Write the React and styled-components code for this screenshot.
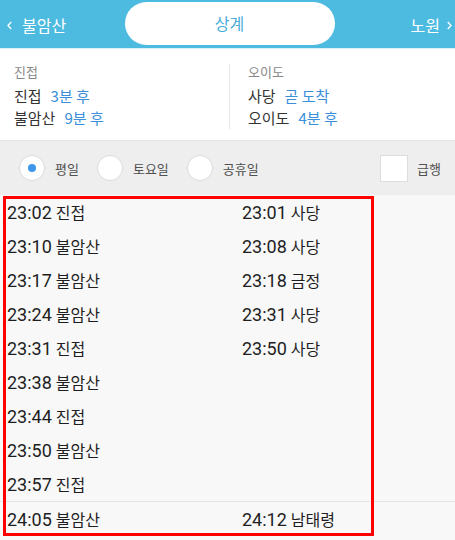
import React from "react";
import styled, { createGlobalStyle } from "styled-components";

const GlobalStyle = createGlobalStyle`
  html, body { margin: 0; padding: 0; }
  body {
    background: #f8f8f8;
    font-family: Roboto, "Noto Sans CJK KR", "Noto Sans", sans-serif;
    color: #222;
  }
`;

const Page = styled.div`
  width: 455px;
  display: flex;
  flex-direction: column;
`;

const Header = styled.header`
  height: 48px;
  background: #4dbbe0;
  border-bottom: 1px solid #d9eef6;
  display: grid;
  grid-template-columns: 1fr 210px 1fr;
  align-items: center;
  padding: 0 2px 0 6px;
`;

const NavLink = styled.div`
  display: flex;
  align-items: center;
  gap: ${(p) => (p.$right ? "6px" : "9px")};
  justify-self: ${(p) => (p.$right ? "end" : "start")};
  color: #fff;
  font-size: 16px;
  font-family: "Noto Sans CJK KR", sans-serif;
  margin-top: 2px;
`;

const Pill = styled.div`
  height: 43px;
  margin-top: -2px;
  border-radius: 22px;
  background: #fff;
  display: flex;
  align-items: center;
  justify-content: center;
  color: #48acd8;
  font-size: 16px;
  font-family: "Noto Sans CJK KR", sans-serif;
`;

const Chevron = ({ dir }) => (
  <svg width="7" height="11" viewBox="0 0 7 11">
    <path
      d={dir === "left" ? "M5.2 2 L2 5.5 L5.2 9" : "M1.8 2 L5 5.5 L1.8 9"}
      fill="none"
      stroke="#fff"
      strokeWidth="1.3"
    />
  </svg>
);

const Info = styled.section`
  height: 92px;
  background: #fff;
  border-bottom: 1px solid #e2e2e2;
  display: grid;
  grid-template-columns: 229px 1fr;
  align-items: start;
  box-sizing: border-box;
  padding-top: 15px;
`;

const InfoCol = styled.div`
  padding-left: ${(p) => (p.$divided ? "18px" : "14px")};
  border-left: ${(p) => (p.$divided ? "1px solid #e6e6e6" : "none")};
  font-family: "Noto Sans CJK KR", sans-serif;
`;

const InfoLabel = styled.div`
  font-size: 13px;
  line-height: 16px;
  color: #888;
  margin-bottom: 5px;
`;

const InfoRow = styled.div`
  font-size: 15px;
  line-height: 22px;
  color: #333;
  display: flex;
  gap: 9px;
`;

const Eta = styled.span`
  color: #3a8fd8;
`;

const Options = styled.div`
  height: 54px;
  background: #eeeeee;
  display: flex;
  align-items: center;
  padding: 0 14px 0 19px;
  font-family: "Noto Sans CJK KR", sans-serif;
`;

const RadioItem = styled.label`
  display: flex;
  align-items: center;
  gap: 10px;
  margin-right: 18px;
  font-size: 13px;
  color: #505050;
`;

const RadioCircle = styled.span`
  width: 26px;
  height: 26px;
  box-sizing: border-box;
  border-radius: 50%;
  border: 1px solid #dcdcdc;
  background: #fff;
  display: flex;
  align-items: center;
  justify-content: center;
  &::after {
    content: "";
    width: 8px;
    height: 8px;
    border-radius: 50%;
    background: ${(p) => (p.$checked ? "#3d97ea" : "transparent")};
  }
`;

const Spacer = styled.div`
  flex: 1;
`;

const CheckItem = styled.label`
  display: flex;
  align-items: center;
  gap: 9px;
  font-size: 13px;
  color: #505050;
`;

const CheckBox = styled.span`
  width: 28px;
  height: 27px;
  box-sizing: border-box;
  border: 1px solid #dddddd;
  background: #fff;
`;

const List = styled.div`
  position: relative;
  background: #f8f8f8;
`;

const HourGroup = styled.div`
  display: grid;
  grid-template-columns: 235px 1fr;
  padding-left: 7px;
  border-bottom: ${(p) => (p.$last ? "none" : "1px solid #e4e4e4")};
`;

const Column = styled.div`
  display: flex;
  flex-direction: column;
`;

const Row = styled.div`
  height: 34px;
  display: flex;
  align-items: center;
  gap: 4px;
  color: #1e1e1e;
`;

const Time = styled.span`
  font-family: Roboto, sans-serif;
  font-size: 18px;
`;

const Dest = styled.span`
  font-family: "Noto Sans CJK KR", sans-serif;
  font-size: 16px;
`;

const Highlight = styled.div`
  position: absolute;
  left: 3px;
  top: 1px;
  width: 371px;
  height: 340px;
  box-sizing: border-box;
  border: 3px solid #ff0000;
  pointer-events: none;
`;

const groups = [
  {
    left: [
      ["23:02", "진접"],
      ["23:10", "불암산"],
      ["23:17", "불암산"],
      ["23:24", "불암산"],
      ["23:31", "진접"],
      ["23:38", "불암산"],
      ["23:44", "진접"],
      ["23:50", "불암산"],
      ["23:57", "진접"],
    ],
    right: [
      ["23:01", "사당"],
      ["23:08", "사당"],
      ["23:18", "금정"],
      ["23:31", "사당"],
      ["23:50", "사당"],
    ],
  },
  {
    left: [["24:05", "불암산"]],
    right: [["24:12", "남태령"]],
  },
];

export default function App() {
  return (
    <Page>
      <GlobalStyle />
      <Header>
        <NavLink>
          <Chevron dir="left" />
          불암산
        </NavLink>
        <Pill>상계</Pill>
        <NavLink $right>
          노원
          <Chevron dir="right" />
        </NavLink>
      </Header>

      <Info>
        <InfoCol>
          <InfoLabel>진접</InfoLabel>
          <InfoRow>
            진접 <Eta>3분 후</Eta>
          </InfoRow>
          <InfoRow>
            불암산 <Eta>9분 후</Eta>
          </InfoRow>
        </InfoCol>
        <InfoCol $divided>
          <InfoLabel>오이도</InfoLabel>
          <InfoRow>
            사당 <Eta>곧 도착</Eta>
          </InfoRow>
          <InfoRow>
            오이도 <Eta>4분 후</Eta>
          </InfoRow>
        </InfoCol>
      </Info>

      <Options>
        <RadioItem>
          <RadioCircle $checked />
          평일
        </RadioItem>
        <RadioItem>
          <RadioCircle />
          토요일
        </RadioItem>
        <RadioItem>
          <RadioCircle />
          공휴일
        </RadioItem>
        <Spacer />
        <CheckItem>
          <CheckBox />
          급행
        </CheckItem>
      </Options>

      <List>
        {groups.map((g, i) => (
          <HourGroup key={i} $last={i === groups.length - 1}>
            <Column>
              {g.left.map(([t, d]) => (
                <Row key={t}>
                  <Time>{t}</Time>
                  <Dest>{d}</Dest>
                </Row>
              ))}
            </Column>
            <Column>
              {g.right.map(([t, d]) => (
                <Row key={t}>
                  <Time>{t}</Time>
                  <Dest>{d}</Dest>
                </Row>
              ))}
            </Column>
          </HourGroup>
        ))}
        <Highlight />
      </List>
    </Page>
  );
}
